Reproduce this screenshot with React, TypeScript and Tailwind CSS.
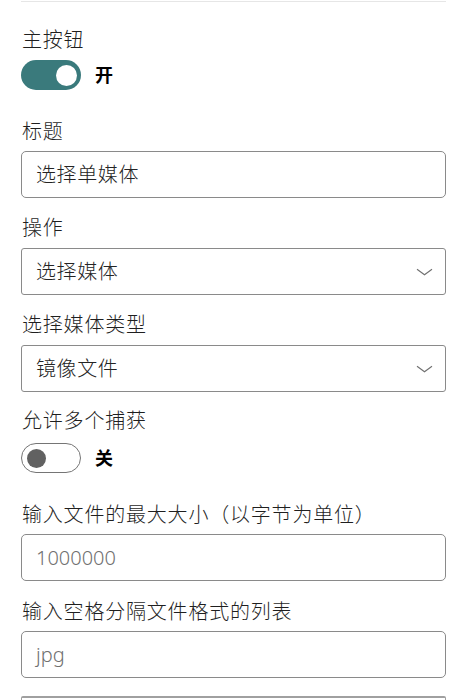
import React from "react";

const font = {
  fontFamily: '"Noto Sans", "Noto Sans CJK SC", sans-serif',
};

function Label({ children, className = "" }: { children: React.ReactNode; className?: string }) {
  return (
    <div
      className={`h-[24px] pl-[1px] text-[20px] leading-[24px] font-light tracking-[0.8px] text-[#1f1f1f] whitespace-nowrap ${className}`}
    >
      {children}
    </div>
  );
}

function TextBox({ value, placeholder }: { value?: string; placeholder?: string }) {
  return (
    <div className="h-[47px] rounded-[5px] border border-[#8a8a8a] bg-white flex items-center pl-[14px] text-[20px] font-light">
      {value ? (
        <span className="text-[#242424] tracking-[0.6px]">{value}</span>
      ) : (
        <span className="text-[#707070]">{placeholder}</span>
      )}
    </div>
  );
}

function Select({ value }: { value: string }) {
  return (
    <div className="h-[47px] rounded-[3px] border border-[#8a8a8a] bg-white flex items-center justify-between pl-[14px] pr-[12px] text-[20px] font-light tracking-[0.6px] text-[#242424]">
      <span>{value}</span>
      <svg width="17" height="8" viewBox="0 0 17 8" fill="none">
        <path d="M1 1.2l7.5 5.6L16 1.2" stroke="#707070" strokeWidth="1.1" />
      </svg>
    </div>
  );
}

function Toggle({ on }: { on: boolean }) {
  return (
    <div className="flex items-center gap-[14px]">
      {on ? (
        <div className="w-[60px] h-[30px] rounded-full bg-[#3a7a7c] flex items-center justify-end pr-[4px]">
          <div className="w-[21px] h-[21px] rounded-full bg-white" />
        </div>
      ) : (
        <div className="w-[60px] h-[30px] rounded-full border border-[#757575] bg-white flex items-center pl-[5px]">
          <div className="w-[19px] h-[19px] rounded-full bg-[#616161]" />
        </div>
      )}
      <span className="text-[18px] font-bold text-black">{on ? "开" : "关"}</span>
    </div>
  );
}

export default function App() {
  return (
    <div className="w-[465px] h-[700px] bg-white overflow-hidden" style={font}>
      <div className="pl-[21px] pr-[19px]">
        <div className="h-[2px] border-b border-[#e6e6e6]" />
        <Label className="mt-[26px] mb-[8px]">主按钮</Label>
        <Toggle on />
        <Label className="mt-[30px] mb-[7px]">标题</Label>
        <TextBox value="选择单媒体" />
        <Label className="mt-[18px] mb-[8px]">操作</Label>
        <Select value="选择媒体" />
        <Label className="mt-[18px] mb-[8px]">选择媒体类型</Label>
        <Select value="镜像文件" />
        <Label className="mt-[17px] mb-[10px]">允许多个捕获</Label>
        <Toggle on={false} />
        <Label className="mt-[30px] mb-[7px]">输入文件的最大大小（以字节为单位）</Label>
        <TextBox placeholder="1000000" />
        <Label className="mt-[19px] mb-[7px]">输入空格分隔文件格式的列表</Label>
        <TextBox placeholder="jpg" />
        <div className="mt-[18px] h-[10px] border-t-2 border-x border-[#a0a0a0] rounded-t-[2px]" />
      </div>
    </div>
  );
}
